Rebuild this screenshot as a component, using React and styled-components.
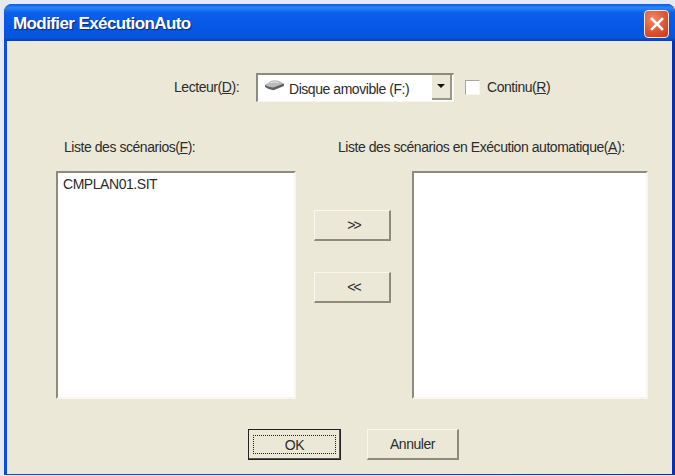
import React from "react";
import styled, { createGlobalStyle } from "styled-components";

const Global = createGlobalStyle`
  html, body { margin: 0; padding: 0; background: #e6eaf6; }
  body { font-family: "Liberation Sans", Arial, sans-serif; color: #2c2c2c; }
`;

const Screen = styled.div`
  width: 675px;
  height: 476px;
  box-sizing: border-box;
  padding: 4px 0 1px 4px;
  overflow: hidden;
`;

const Win = styled.div`
  width: 671px;
  height: 471px;
  display: flex;
  flex-direction: column;
  border-radius: 8px 8px 0 0;
  overflow: hidden;
  background: linear-gradient(90deg, #0a4fdc 0%, #0a4fdc 50%, #0a2fb0 100%);
`;

const TitleBar = styled.div`
  height: 37px;
  flex: none;
  display: flex;
  align-items: center;
  justify-content: space-between;
  padding: 6px 6px 3px 9px;
  box-sizing: border-box;
  background: linear-gradient(180deg, #0a5ae6 0%, #2a86f5 10%, #0b5fe8 24%, #0456e4 70%, #0a54dc 90%, #0340c0 100%);
`;

const Title = styled.span`
  color: #fff;
  font: bold 17px "Liberation Sans", Arial, sans-serif;
  letter-spacing: -0.6px;
  text-shadow: 1px 1px 1px #0a2a80;
`;

const CloseButton = styled.div`
  width: 25px;
  height: 28px;
  box-sizing: border-box;
  border: 1px solid #f3e4dc;
  border-radius: 4px;
  background: radial-gradient(circle at 35% 30%, #ee8a66, #de5430 55%, #c23c16);
  display: flex;
  align-items: center;
  justify-content: center;
`;

const Client = styled.div`
  flex: 1;
  margin: 0 3px 1px 3px;
  background: #ebe8d8;
  padding-top: 32px;
  display: flex;
  flex-direction: column;
`;

const DriveRow = styled.div`
  display: flex;
  align-items: center;
  height: 28px;
  padding-left: 167px;
`;

const Label = styled.label`
  font-size: 14px;
  letter-spacing: -0.45px;
  white-space: nowrap;
  u { text-decoration: underline; text-underline-offset: 1px; }
`;

const DriveLabel = styled(Label)`
  width: 82px;
  flex: none;
`;

const Select = styled.div`
  width: 198px;
  height: 29px;
  flex: none;
  box-sizing: border-box;
  display: flex;
  align-items: stretch;
  background: #fff;
  border-top: 2px solid #8d8b7c;
  border-left: 2px solid #8d8b7c;
  border-right: 1px solid #f7f6ef;
  border-bottom: 1px solid #f7f6ef;
`;

const SelectValue = styled.div`
  flex: 1;
  display: flex;
  align-items: center;
  gap: 4px;
  padding-left: 6px;
  font-size: 14px;
  letter-spacing: -0.45px;
  span { padding-top: 2px; }
  svg { margin-bottom: 4px; }
`;

const DropButton = styled.div`
  width: 20px;
  margin: 0 1px 1px 0;
  box-sizing: border-box;
  background: #ebe8d8;
  border-right: 2px solid #9a988a;
  border-bottom: 2px solid #9a988a;
  display: flex;
  align-items: center;
  justify-content: center;
  &::after {
    content: "";
    border-left: 4px solid transparent;
    border-right: 4px solid transparent;
    border-top: 4px solid #111;
  }
`;

const CheckLabel = styled(Label)`
  display: flex;
  align-items: center;
  gap: 7px;
  margin-left: 11px;
`;

const CheckBox = styled.span`
  width: 15px;
  height: 15px;
  box-sizing: border-box;
  background: #fff;
  border-top: 1px solid #a9a796;
  border-left: 1px solid #a9a796;
  border-right: 1px solid #f7f6ef;
  border-bottom: 1px solid #f7f6ef;
`;

const Lists = styled.div`
  display: grid;
  grid-template-columns: 240px 116px 236px;
  padding-left: 49px;
  margin-top: 38px;
`;

const ListColumn = styled.div`
  display: flex;
  flex-direction: column;
`;

const ListCaption = styled(Label)`
  height: 32px;
  margin-left: ${(p) => p.$offset}px;
`;

const ListBox = styled.div`
  height: 228px;
  box-sizing: border-box;
  background: #fff;
  border-top: 2px solid #8d8b7c;
  border-left: 2px solid #8d8b7c;
  border-right: 2px solid #f7f6ef;
  border-bottom: 2px solid #f7f6ef;
  padding: 3px 5px;
  font-size: 14px;
  letter-spacing: -0.45px;
`;

const MoveColumn = styled.div`
  display: flex;
  flex-direction: column;
  align-items: center;
  padding-top: 71px;
  gap: 31px;
  padding-right: 3px;
`;

const Button = styled.button`
  width: ${(p) => p.$width}px;
  height: ${(p) => p.$height}px;
  padding: 0;
  box-sizing: border-box;
  background: #ebe8d8;
  font: 14px "Liberation Sans", Arial, sans-serif;
  letter-spacing: -0.45px;
  color: #2c2c2c;
  border-style: solid;
  border-width: 1px 2px 2px 1px;
  border-color: #f8f7f0 #8d8b7c #8d8b7c #f8f7f0;
  border-radius: 0;
`;

const MoveButton = styled(Button)`
  letter-spacing: -2px;
  padding-left: 3px;
`;

const DefaultButton = styled(Button)`
  border: 1px solid #222;
  box-shadow: inset -1px -1px 0 #555;
  padding: 5px 4px;
`;

const FocusRing = styled.span`
  display: flex;
  align-items: center;
  justify-content: center;
  height: 100%;
  box-sizing: border-box;
  border: 1px dotted #222;
`;

const Footer = styled.div`
  display: flex;
  gap: 26px;
  padding-left: 241px;
  margin-top: 30px;
`;

const DiskIcon = () => (
  <svg width="21" height="13" viewBox="0 0 20 12">
    <path d="M1 5.5 L1 7.5 Q5 10.5 9 10.5 L19 6.5 L19 4 Z" fill="#5e5e5e" />
    <path d="M1 5.5 L7 1.5 Q10 0.5 14 1.5 L19 4 L9 8 Q5 8 1 5.5 Z" fill="#b9b9b9" />
    <path d="M6 3.5 Q10 2 14 3.5" stroke="#e4e4e4" strokeWidth="1" fill="none" />
  </svg>
);

const CloseIcon = () => (
  <svg width="14" height="14" viewBox="0 0 14 14">
    <path d="M2 2 L12 12 M12 2 L2 12" stroke="#fff" strokeWidth="2.6" strokeLinecap="square" />
  </svg>
);

export default function App() {
  return (
    <Screen>
      <Global />
      <Win>
        <TitleBar>
          <Title>Modifier ExécutionAuto</Title>
          <CloseButton><CloseIcon /></CloseButton>
        </TitleBar>
        <Client>
          <DriveRow>
            <DriveLabel>Lecteur(<u>D</u>):</DriveLabel>
            <Select>
              <SelectValue><DiskIcon /><span>Disque amovible (F:)</span></SelectValue>
              <DropButton />
            </Select>
            <CheckLabel><CheckBox /><span>Continu(<u>R</u>)</span></CheckLabel>
          </DriveRow>
          <Lists>
            <ListColumn>
              <ListCaption $offset={8}>Liste des scénarios(<u>F</u>):</ListCaption>
              <ListBox>CMPLAN01.SIT</ListBox>
            </ListColumn>
            <MoveColumn>
              <MoveButton $width={77} $height={31}>&gt;&gt;</MoveButton>
              <MoveButton $width={77} $height={31}>&lt;&lt;</MoveButton>
            </MoveColumn>
            <ListColumn>
              <ListCaption $offset={-74}>Liste des scénarios en Exécution automatique(<u>A</u>):</ListCaption>
              <ListBox />
            </ListColumn>
          </Lists>
          <Footer>
            <DefaultButton $width={93} $height={31}><FocusRing>OK</FocusRing></DefaultButton>
            <Button $width={92} $height={31}>Annuler</Button>
          </Footer>
        </Client>
      </Win>
    </Screen>
  );
}
